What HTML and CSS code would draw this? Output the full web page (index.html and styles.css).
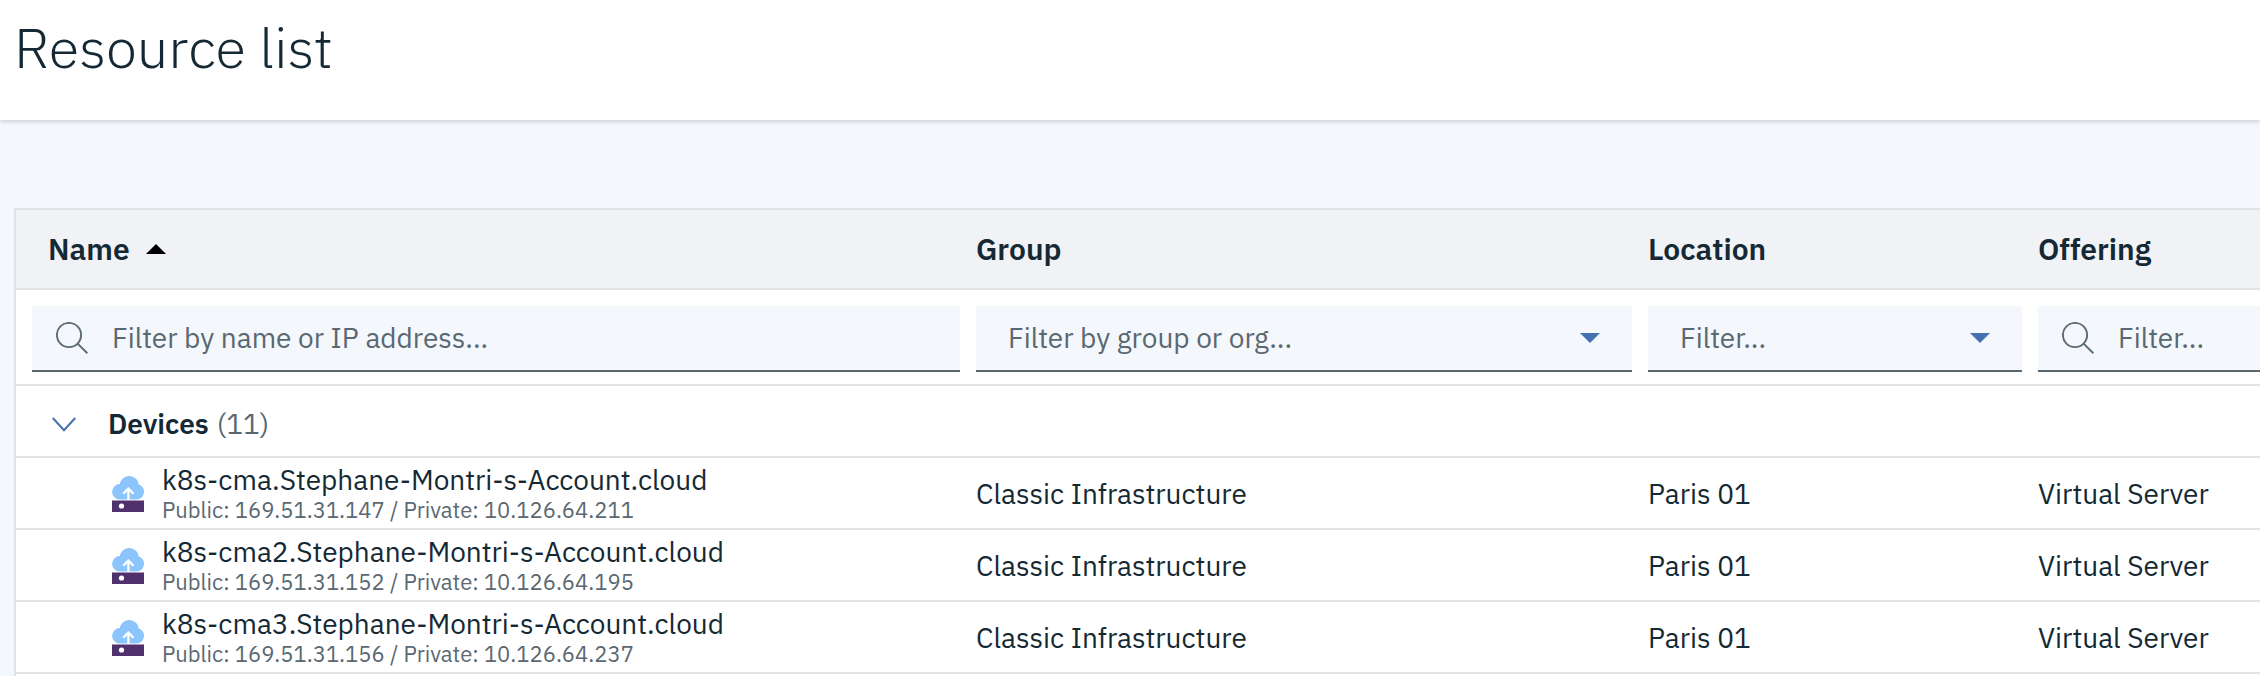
FILE: index.html
```html
<!DOCTYPE html>
<html lang="en">
<head>
<meta charset="utf-8">
<title>Resource list</title>
<link rel="stylesheet" href="styles.css">
</head>
<body>
<svg class="sprite" width="0" height="0">
  <symbol id="search" viewBox="0 0 32 32"><circle cx="13" cy="13" r="12.1"/><path d="M21.6 21.6 31.400 31.200"/></symbol>
  <symbol id="caret" viewBox="0 0 20 10"><path d="M0 0h20L10 10z"/></symbol>
  <symbol id="server" viewBox="0 0 32 36">
    <path fill="#8cc5fb" d="M8 23.500a7.800 7.700 0 0 1-.2-15.400A9.800 9.400 0 0 1 17.600 0a9.800 9.400 0 0 1 9.200 8.500A7.700 7.700 0 0 1 24.300 23.500z"/>
    <path fill="#50316e" d="M0 24.500h32V36H0z"/>
    <circle cx="9.500" cy="30" r="2.600" fill="#fff"/>
    <path d="M16.400 24V13M11.300 17.700l5.100-5.100 5.100 5.100" fill="none" stroke="#fff" stroke-width="2.300"/>
  </symbol>
</svg>
<header class="page-header"><h1 class="title">Resource list</h1></header>
<main class="table">
  <div class="row head">
    <div class="cell name-head"><span class="label">Name</span><svg class="sort"><use href="#caret"/></svg></div>
    <div class="cell label">Group</div>
    <div class="cell label">Location</div>
    <div class="cell label">Offering</div>
  </div>
  <div class="row filters">
    <div class="field"><svg class="search"><use href="#search"/></svg><span>Filter by name or IP address...</span></div>
    <div class="field select"><span>Filter by group or org...</span><svg class="caret"><use href="#caret"/></svg></div>
    <div class="field select"><span>Filter...</span><svg class="caret"><use href="#caret"/></svg></div>
    <div class="field"><svg class="search"><use href="#search"/></svg><span>Filter...</span></div>
  </div>
  <div class="section">
    <svg class="chevron" viewBox="0 0 24 15"><path d="M.8 1 12 13.200 23.200 1"/></svg>
    <span class="section-name">Devices</span><span class="count">(11)</span>
  </div>
  <div class="row item">
    <div class="cell device"><svg class="server"><use href="#server"/></svg><div class="lines"><span class="host">k8s-cma.Stephane-Montri-s-Account.cloud</span><span class="ips">Public: 169.51.31.147 / Private: 10.126.64.211</span></div></div>
    <div class="cell text">Classic Infrastructure</div>
    <div class="cell text">Paris 01</div>
    <div class="cell text">Virtual Server</div>
  </div>
  <div class="row item">
    <div class="cell device"><svg class="server"><use href="#server"/></svg><div class="lines"><span class="host">k8s-cma2.Stephane-Montri-s-Account.cloud</span><span class="ips">Public: 169.51.31.152 / Private: 10.126.64.195</span></div></div>
    <div class="cell text">Classic Infrastructure</div>
    <div class="cell text">Paris 01</div>
    <div class="cell text">Virtual Server</div>
  </div>
  <div class="row item">
    <div class="cell device"><svg class="server"><use href="#server"/></svg><div class="lines"><span class="host">k8s-cma3.Stephane-Montri-s-Account.cloud</span><span class="ips">Public: 169.51.31.156 / Private: 10.126.64.237</span></div></div>
    <div class="cell text">Classic Infrastructure</div>
    <div class="cell text">Paris 01</div>
    <div class="cell text">Virtual Server</div>
  </div>
</main>
</body>
</html>
```
FILE: styles.css
```css
* { box-sizing: border-box; }
body {
  margin: 0;
  height: 676px;
  overflow: hidden;
  background: #f4f7fb;
  color: #152935;
  font-family: "IBM Plex Sans", Roboto, "Noto Sans", sans-serif;
  font-size: 28px;
  line-height: 36px;
}
span { white-space: nowrap; }
.sprite { position: absolute; }
.page-header {
  height: 120px;
  padding: 11px 0 0 14px;
  background: #fff;
  box-shadow: 0 2px 4px rgba(0, 0, 0, .15);
}
.title { margin: 0; font-size: 56px; line-height: 72px; font-weight: 300; }
.table {
  height: 468px;
  margin: 88px 0 0 14px;
  border: 2px solid #dfe3e6;
  border-width: 2px 0 0 2px;
  background: #fff;
}
.row {
  display: grid;
  grid-template-columns: 928px 656px 374px 1fr;
  column-gap: 16px;
  padding-left: 16px;
  border-bottom: 2px solid #dfe3e6;
}
.head { height: 80px; align-items: center; background: #f1f2f6; }
.label { font-weight: 600; font-size: 30px; line-height: 38px; }
.name-head { display: flex; align-items: center; gap: 16px; padding-left: 16px; }
.sort { width: 20px; height: 10px; transform: scaleY(-1); }
.filters { height: 96px; padding-top: 16px; align-items: start; }
.field {
  display: flex;
  align-items: center;
  height: 66px;
  padding: 0 32px 0 24px;
  border-bottom: 2px solid #5a6872;
  background: #f4f7fb;
  color: #5a6872;
}
.select { justify-content: space-between; padding-left: 32px; }
.search { width: 32px; height: 32px; margin-right: 24px; fill: none; stroke: #5a6872; stroke-width: 1.9; }
.caret { width: 20px; height: 10px; fill: #4671b0; }
.section { display: flex; align-items: center; height: 72px; padding: 6px 0 0 36px; border-bottom: 2px solid #dfe3e6; }
.chevron { width: 24px; height: 15px; margin-right: 32px; fill: none; stroke: #4671b0; stroke-width: 2; }
.section-name { font-weight: 600; margin-right: 8px; }
.count { color: #5a6872; }
.item { height: 72px; align-items: center; }
.text { padding-top: 2px; }
.device { display: flex; align-items: center; gap: 18px; padding-left: 80px; }
.server { width: 32px; height: 36px; margin-top: 2px; }
.lines { display: flex; flex-direction: column; }
.host { line-height: 34px; }
.ips { font-size: 22px; line-height: 26px; color: #5a6872; }
```
